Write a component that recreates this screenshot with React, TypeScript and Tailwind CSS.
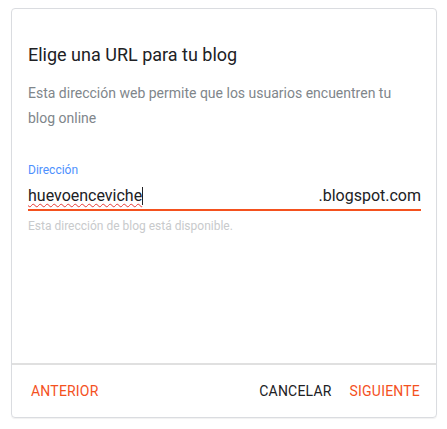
import React from "react";

export default function App() {
  return (
    <div className="w-[447px] h-[429px] bg-white pt-[8px] pl-[11px]" style={{ fontFamily: "Roboto, 'Noto Sans', sans-serif" }}>
      <div className="w-[426px] h-[410px] border border-[#dadce0] rounded-[4px] flex flex-col shadow-[0_1px_1px_rgba(0,0,0,0.06)]">
        <div className="flex-1 pl-[16px] pr-[15px] pt-[34px]">
          <h1 className="text-[18px] leading-[24px] text-[#202124] font-normal">Elige una URL para tu blog</h1>
          <p className="mt-[14px] text-[14px] leading-[25px] text-[#80868b] pr-[20px]">
            Esta dirección web permite que los usuarios encuentren tu blog online
          </p>
          <div className="mt-[32px]">
            <div className="text-[12px] leading-[14px] text-[#4d90fe]">Dirección</div>
            <div className="mt-[9px] flex items-end justify-between border-b-2 border-[#f4511e] pb-[3px]">
              <div className="flex items-center text-[16px] leading-[20px] text-[#202124]">
                <span className="underline decoration-wavy decoration-[#e53935] decoration-[1px] underline-offset-[2px]">huevoenceviche</span>
                <span className="inline-block w-px h-[18px] bg-[#202124]"></span>
              </div>
              <div className="text-[16px] leading-[20px] text-[#202124]">.blogspot.com</div>
            </div>
            <div className="mt-[8px] text-[12px] leading-[14px] text-[#c8cacc]">Esta dirección de blog está disponible.</div>
          </div>
        </div>
        <div className="h-[54px] border-t-2 border-[#e0e0e0] flex items-center justify-between pl-[19px] pr-[16px] text-[14px] font-normal tracking-[0.2px]">
          <span className="text-[#f4511e]">ANTERIOR</span>
          <div className="flex gap-[18px]">
            <span className="text-[#202124]">CANCELAR</span>
            <span className="text-[#f4511e]">SIGUIENTE</span>
          </div>
        </div>
      </div>
    </div>
  );
}
